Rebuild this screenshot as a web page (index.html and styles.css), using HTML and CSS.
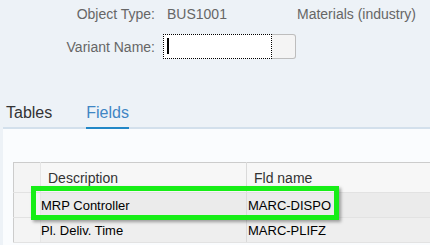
FILE: index.html
```html
<!DOCTYPE html>
<html lang="en">
  <head>
    <meta charset="UTF-8" />
    <title>Variant</title>
    <link rel="stylesheet" href="styles.css">
  </head>
  <body>
    <div class="header-form">
      <span class="label">Object Type:</span>
      <span class="value">BUS1001</span>
      <span class="value">Materials (industry)</span>

      <span class="label">Variant Name:</span>
      <div class="input-group">
        <div class="input-field"><span class="caret"></span></div>
        <div class="input-btn"></div>
      </div>
    </div>

    <div class="tabs">
      <span class="tab">Tables</span>
      <span class="tab active">Fields</span>
    </div>

    <div class="panel">
      <div class="table-wrap">
        <table class="grid">
          <colgroup>
            <col class="w-sel" />
            <col class="w-desc" />
            <col />
          </colgroup>
          <tr class="head">
            <td class="sel"></td>
            <td class="c1">Description</td>
            <td class="c2">Fld name</td>
          </tr>
          <tr class="row selected">
            <td class="sel"></td>
            <td class="c1">MRP Controller</td>
            <td class="c2">MARC-DISPO</td>
          </tr>
          <tr class="row">
            <td class="sel"></td>
            <td class="c1">Pl. Deliv. Time</td>
            <td class="c2">MARC-PLIFZ</td>
          </tr>
        </table>
        <!-- evidenziazione della riga -->
        <div class="highlight"></div>
      </div>
    </div>
  </body>
</html>
```

FILE: styles.css
```css
body {
  margin: 0;
  font-family: "Liberation Sans", Arial, sans-serif;
  background-color: #edf2f7;
  overflow: hidden;
}

.header-form {
  display: grid;
  grid-template-columns: 155px 118px auto;
  column-gap: 12px;
  row-gap: 12px;
  align-items: center;
  align-content: start;
  padding-top: 6px;
  height: 94px;
  font-size: 14px;
  color: #666;
  white-space: nowrap;
}

.label {
  text-align: right;
}

.input-group {
  display: flex;
  width: 133px;
  height: 25px;
  margin-left: -4px;
}

.input-field {
  width: 109px;
  background-color: #fff;
  border: 1px dotted #000;
  box-sizing: border-box;
  padding: 3px 0 0 3px;
}

.caret {
  display: block;
  width: 2px;
  height: 16px;
  background-color: #000;
}

.input-btn {
  flex: 1;
  background-color: #f4f4f4;
  border: 1px solid #bdbdbd;
  border-left: none;
  border-radius: 0 3px 3px 0;
}

.tabs {
  margin-left: 3px;
  display: flex;
  gap: 34px;
  padding-left: 3px;
  border-bottom: 2px solid #d3e0ec;
  height: 27px;
}

.tab {
  font-size: 16px;
  color: #333;
  line-height: 21px;
  margin-top: 2px;
}

.tab.active {
  color: #3f86c4;
  border-bottom: 2px solid #2187c7;
  margin-bottom: -2px;
}

.panel {
  margin-left: 3px;
  background-color: #fafcfe;
  padding: 33px 0 0 10px;
  height: 83px;
}

.table-wrap {
  position: relative;
}

.grid {
  border-collapse: collapse;
  table-layout: fixed;
  width: 430px;
  border-top: 1px solid #cccccc;
  border-left: 1px solid #cccccc;
}

.w-sel {
  width: 27px;
}

.w-desc {
  width: 206px;
}

.grid td {
  padding: 0;
  border-bottom: 1px solid #e2e2e2;
  white-space: nowrap;
}

.head td {
  height: 29px;
  background-color: #f7f7f7;
  font-size: 14px;
  color: #333;
}

.row td {
  height: 24px;
  background-color: #eeeeee;
  font-size: 13px;
  color: #000;
}

.row.selected td {
  background-color: #ebebeb;
}

.grid td.sel {
  background-color: #f4f4f4;
  border-right: 1px solid #e6e6e6;
}

.c1 {
  padding-left: 1px;
  border-right: 1px solid #dadada;
}

.grid .head .c1,
.grid .head .c2 {
  padding-left: 7px;
}

.grid .c2 {
  padding-left: 1px;
}

.highlight {
  position: absolute;
  left: 18px;
  top: 24px;
  width: 308px;
  height: 34px;
  box-sizing: border-box;
  border: 5px solid #17ee17;
  box-shadow: 2px 2px 3px rgba(0, 0, 0, 0.35);
}
```
